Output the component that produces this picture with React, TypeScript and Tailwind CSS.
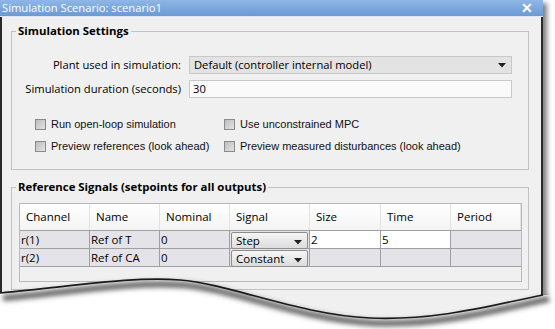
import React from "react";

const ui = { fontFamily: '"Open Sans", "Noto Sans", sans-serif' };
const arial = { fontFamily: '"Liberation Sans", Arial, sans-serif' };

function Arrow() {
  return (
    <svg width="8" height="5" viewBox="0 0 8 5" className="block">
      <path d="M0 0 L8 0 L4 4.5 Z" fill="#222" />
    </svg>
  );
}

function Check({ label }: { label: string }) {
  return (
    <div className="flex items-center gap-[5px] h-[20px]">
      <div className="w-[11px] h-[11px] border border-[#8a8a8a] bg-gradient-to-br from-[#bdbdbd] to-[#e4e4e4]" />
      <span className="text-[11px] text-[#111]" style={arial}>{label}</span>
    </div>
  );
}

function Combo({ text }: { text: string }) {
  return (
    <div className="h-[17px] mx-[1px] my-[1px] flex items-center justify-between rounded-[2px] border border-[#8d8d8d] bg-gradient-to-b from-[#f6f6f6] to-[#dcdcdc] pl-[4px] pr-[5px]">
      <span className="text-[11.5px] leading-none">{text}</span>
      <div className="mt-[4px]"><Arrow /></div>
    </div>
  );
}

const cols = ["w-[70px]", "w-[70px]", "w-[70px]", "w-[80px]", "w-[71px]", "w-[70px]", "w-[70px]"];

function Cell({ i, children, white }: { i: number; children?: React.ReactNode; white?: boolean }) {
  return (
    <div className={`${cols[i]} h-full flex items-center border-r border-[#a0a0a0] last:border-r-0 pl-[1px] text-[11.5px] ${white ? "bg-white" : ""}`}>
      {children}
    </div>
  );
}

export default function App() {
  const headers = ["Channel", "Name", "Nominal", "Signal", "Size", "Time", "Period"];
  return (
    <div className="relative w-[555px] h-[329px] bg-white overflow-hidden text-black" style={ui}>
      <div className="relative w-[543px] h-[329px] bg-[#f0f0f0] border-l-[2px] border-r-[2px] border-[#2a2a2a] shadow-[4px_3px_5px_rgba(0,0,0,0.5)]">
        {/* title bar */}
        <div className="h-[17px] -mx-[2px] flex items-center justify-between bg-gradient-to-b from-[#8fb6e6] to-[#6b9ad4] pl-[2px] pr-[10px] border-b border-[#dfe8f3]">
          <span className="text-[11.2px] text-white leading-none">Simulation Scenario: scenario1</span>
          <span className="text-[14px] text-white leading-none font-bold" style={arial}>✕</span>
        </div>

        {/* Simulation Settings */}
        <div className="relative ml-[9px] mt-[14px] w-[518px] h-[139px] border border-[#c2c2c2]">
          <span className="absolute -top-[10px] left-[4px] px-[2px] bg-[#f0f0f0] text-[11.4px] font-bold leading-[18px]">Simulation Settings</span>
          <div className="grid grid-cols-[169px_323px] gap-x-[8px] gap-y-[6px] mt-[24px] items-center">
            <span className="text-right text-[11.2px]">Plant used in simulation:</span>
            <div className="h-[18px] flex items-center justify-between border border-[#c8c8c8] bg-[#e3e3e3] pl-[4px] pr-[5px]">
              <span className="text-[11.2px] leading-none">Default (controller internal model)</span>
              <Arrow />
            </div>
            <span className="text-right text-[11.2px]">Simulation duration (seconds)</span>
            <div className="h-[18px] flex items-center border border-[#c8c8c8] bg-[#fafafa] pl-[3px]">
              <span className="text-[11.2px] leading-none">30</span>
            </div>
          </div>
          <div className="flex mt-[16px] pl-[23px]">
            <div className="w-[189px] flex flex-col gap-[2px]">
              <Check label="Run open-loop simulation" />
              <Check label="Preview references (look ahead)" />
            </div>
            <div className="flex flex-col gap-[2px]">
              <Check label="Use unconstrained MPC" />
              <Check label="Preview measured disturbances (look ahead)" />
            </div>
          </div>
        </div>

        {/* Reference Signals */}
        <div className="relative ml-[9px] mt-[17px] w-[518px] h-[103px] border border-[#c2c2c2]">
          <span className="absolute -top-[10px] left-[4px] px-[2px] bg-[#f0f0f0] text-[11.4px] font-bold leading-[18px]">Reference Signals (setpoints for all outputs)</span>
          <div className="ml-[7px] mt-[15px] w-[503px] h-[79px] border border-[#b8b8b8] bg-[#f0f0f0] flex flex-col">
            <div className="h-[27px] flex bg-gradient-to-b from-white to-[#f4f4f4] border-b border-[#a0a0a0]">
              {headers.map((h, i) => (
                <div key={h} className={`${cols[i]} h-full flex items-center pl-[6px] text-[11.5px] border-r border-[#e2e2e2]`}>{h}</div>
              ))}
            </div>
            <div className="h-[18px] flex bg-[#e4e4e8] border-b border-[#a0a0a0]">
              <Cell i={0}>r(1)</Cell>
              <Cell i={1}>Ref of T</Cell>
              <Cell i={2}>0</Cell>
              <div className={`${cols[3]} h-full border-r border-[#a0a0a0]`}><Combo text="Step" /></div>
              <Cell i={4} white>2</Cell>
              <Cell i={5} white>5</Cell>
              <Cell i={6} />
            </div>
            <div className="h-[18px] flex bg-[#e4e4e8] border-b border-[#a0a0a0]">
              <Cell i={0}>r(2)</Cell>
              <Cell i={1}>Ref of CA</Cell>
              <Cell i={2}>0</Cell>
              <div className={`${cols[3]} h-full border-r border-[#a0a0a0]`}><Combo text="Constant" /></div>
              <Cell i={4} />
              <Cell i={5} />
              <Cell i={6} />
            </div>
          </div>
        </div>
      </div>

      {/* torn bottom edge */}
      <svg className="absolute inset-0 pointer-events-none" width="555" height="329" viewBox="0 0 555 329">
        <defs>
          <filter id="blur" x="-10%" y="-50%" width="120%" height="200%">
            <feGaussianBlur stdDeviation="2.5" />
          </filter>
        </defs>
        <path d="M0 293 C 70 287, 130 276, 180 280 S 300 315, 370 318 S 500 303, 543 295 L 555 295 L 555 329 L 0 329 Z" fill="#ffffff" />
        <path d="M3 298 C 73 292, 133 281, 183 285 S 303 320, 373 323 S 503 308, 549 299" stroke="#444" strokeOpacity="0.85" strokeWidth="6" fill="none" filter="url(#blur)" />
        <path d="M0 293 C 70 287, 130 276, 180 280 S 300 315, 370 318 S 500 303, 543 295" stroke="#1a1a1a" strokeWidth="1.6" fill="none" />
      </svg>
    </div>
  );
}
